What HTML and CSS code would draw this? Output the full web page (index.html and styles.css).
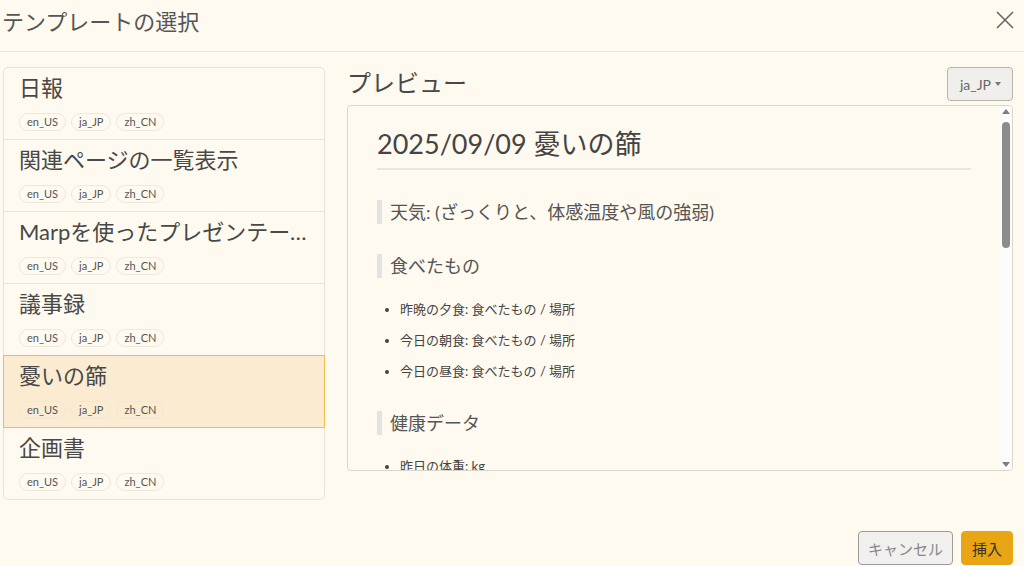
FILE: index.html
```html
<!DOCTYPE html>
<html lang="ja">

<head>
    <meta charset="UTF-8">
    <meta name="viewport" content="width=device-width, initial-scale=1.0">
    <title>テンプレートの選択</title>
    <link rel="stylesheet" href="styles.css">
</head>

<body>
    <div class="dialog">
        <div class="dialog-header">
            <h1 class="dialog-title">テンプレートの選択</h1>
            <button type="button" class="close-btn" aria-label="close">
                <svg width="18" height="18" viewBox="0 0 18 18">
                    <path d="M1 1 L17 17 M17 1 L1 17" stroke="#666" stroke-width="1.6" fill="none" />
                </svg>
            </button>
        </div>

        <div class="dialog-body">
            <ul class="template-list">
                <li class="template-item">
                    <div class="template-name">日報</div>
                    <div class="tags"><span class="tag">en_US</span><span class="tag">ja_JP</span><span class="tag">zh_CN</span></div>
                </li>
                <li class="template-item">
                    <div class="template-name">関連ページの一覧表示</div>
                    <div class="tags"><span class="tag">en_US</span><span class="tag">ja_JP</span><span class="tag">zh_CN</span></div>
                </li>
                <li class="template-item">
                    <div class="template-name">Marpを使ったプレゼンテーションのテンプレート</div>
                    <div class="tags"><span class="tag">en_US</span><span class="tag">ja_JP</span><span class="tag">zh_CN</span></div>
                </li>
                <li class="template-item">
                    <div class="template-name">議事録</div>
                    <div class="tags"><span class="tag">en_US</span><span class="tag">ja_JP</span><span class="tag">zh_CN</span></div>
                </li>
                <li class="template-item active">
                    <div class="template-name">憂いの篩</div>
                    <div class="tags"><span class="tag">en_US</span><span class="tag">ja_JP</span><span class="tag">zh_CN</span></div>
                </li>
                <li class="template-item">
                    <div class="template-name">企画書</div>
                    <div class="tags"><span class="tag">en_US</span><span class="tag">ja_JP</span><span class="tag">zh_CN</span></div>
                </li>
            </ul>

            <div class="preview-col">
                <div class="preview-head">
                    <h2 class="preview-title">プレビュー</h2>
                    <button type="button" class="locale-btn">ja_JP <span class="caret"></span></button>
                </div>
                <div class="preview-box">
                    <div class="preview-content">
                        <h1>2025/09/09 憂いの篩</h1>
                        <h2>天気: (ざっくりと、体感温度や風の強弱)</h2>
                        <h2>食べたもの</h2>
                        <ul>
                            <li>昨晩の夕食: 食べたもの / 場所</li>
                            <li>今日の朝食: 食べたもの / 場所</li>
                            <li>今日の昼食: 食べたもの / 場所</li>
                        </ul>
                        <h2>健康データ</h2>
                        <ul>
                            <li>昨日の体重: kg</li>
                        </ul>
                    </div>
                    <!-- scrollbar of the preview pane -->
                    <div class="scrollbar">
                        <span class="arrow-up"></span>
                        <div class="track"><div class="thumb"></div></div>
                        <span class="arrow-down"></span>
                    </div>
                </div>
            </div>
        </div>

        <div class="dialog-footer">
            <button type="button" class="btn cancel-btn">キャンセル</button>
            <button type="button" class="btn insert-btn">挿入</button>
        </div>
    </div>
</body>

</html>
```

FILE: styles.css
```css
body {
    margin: 0;
    background-color: #fffaf0;
    color: #444;
    font-family: Lato, "Noto Sans CJK JP", sans-serif;
}

.dialog {
    display: flex;
    flex-direction: column;
    height: 566px;
}

.dialog-header {
    display: flex;
    justify-content: space-between;
    align-items: center;
    height: 52px;
    padding: 0 10px 12px 2px;
    box-sizing: border-box;
    border-bottom: 1px solid #ebe6da;
}

.dialog-title {
    margin: 0;
    font-size: 22px;
    font-weight: normal;
    color: #555;
}

.close-btn {
    background: none;
    border: none;
    padding: 0;
    cursor: pointer;
    display: flex;
}

.dialog-body {
    display: grid;
    grid-template-columns: 322px 1fr;
    gap: 22px;
    padding: 15px 11px 0 3px;
    height: 479px;
    box-sizing: border-box;
}

.template-list {
    list-style: none;
    margin: 0;
    padding: 0;
    align-self: start;
    border: 1px solid #e8e3d7;
    border-radius: 5px;
}

.template-item {
    padding: 6px 15px 8px;
    border-bottom: 1px solid #ebe6db;
    cursor: pointer;
}

.template-item:last-child {
    border-bottom: none;
}

.template-item.active {
    background-color: #fbecd1;
    border: 1px solid #f0bd4c;
    margin: -1px -1px 0;
}

.template-name {
    font-size: 22px;
    line-height: 28px;
    white-space: nowrap;
    overflow: hidden;
    text-overflow: ellipsis;
    color: #484848;
}

.tags {
    display: flex;
    gap: 5px;
    margin-top: 11px;
}

.tag {
    font-size: 11px;
    line-height: 16px;
    padding: 0 7px;
    border: 1px solid #ece8de;
    border-radius: 9px;
    color: #555;
}

.preview-col {
    display: flex;
    flex-direction: column;
    min-width: 0;
}

.preview-head {
    display: flex;
    justify-content: space-between;
    align-items: flex-start;
    height: 38px;
}

.preview-title {
    margin: 0;
    font-size: 24px;
    font-weight: normal;
    line-height: 31px;
    color: #484848;
}

.locale-btn {
    height: 34px;
    padding: 0 11px 0 12px;
    background-color: #f0efeb;
    border: 1px solid #b8b5ae;
    border-radius: 4px;
    color: #666;
    font-family: inherit;
    font-size: 14px;
    display: flex;
    align-items: center;
    gap: 4px;
}

.caret {
    width: 0;
    height: 0;
    border-left: 3px solid transparent;
    border-right: 3px solid transparent;
    border-top: 4px solid #777;
}

.preview-box {
    display: flex;
    height: 366px;
    box-sizing: border-box;
    border: 1px solid #d9d5cb;
    border-radius: 4px;
    overflow: hidden;
}

.preview-content {
    flex: 1;
    min-width: 0;
    overflow: hidden;
    padding: 0 29px;
}

.preview-box h1 {
    margin: 21px 0 0;
    padding-bottom: 7px;
    font-size: 27px;
    font-weight: normal;
    line-height: 34px;
    border-bottom: 2px solid #e6e6e6;
}

.preview-box h2 {
    margin: 30px 0 0;
    padding-left: 8px;
    border-left: 5px solid #e3e3e3;
    font-size: 18px;
    font-weight: normal;
    line-height: 24px;
    color: #555;
}

.preview-box ul {
    margin: 21px 0 0;
    padding-left: 23px;
    font-size: 13px;
    line-height: 20px;
}

.preview-box li {
    margin-bottom: 11px;
}

.scrollbar {
    width: 12px;
    display: flex;
    flex-direction: column;
    align-items: center;
    background-color: #fcfcfb;
    padding: 3px 0;
    box-sizing: border-box;
}

.arrow-up,
.arrow-down {
    width: 0;
    height: 0;
    border-left: 4px solid transparent;
    border-right: 4px solid transparent;
}

.arrow-up {
    border-bottom: 5px solid #7d7d7d;
}

.arrow-down {
    border-top: 5px solid #7d7d7d;
}

.track {
    flex: 1;
    width: 100%;
    padding: 8px 1px 4px;
    box-sizing: border-box;
}

.thumb {
    height: 126px;
    border-radius: 5px;
    background-color: #8c8c8c;
    margin: 0 1px;
}

.dialog-footer {
    display: flex;
    justify-content: flex-end;
    gap: 8px;
    padding: 0 11px;
}

.btn {
    height: 34px;
    border-radius: 4px;
    font-family: inherit;
    font-size: 15px;
    cursor: pointer;
}

.cancel-btn {
    padding: 0 9px;
    background-color: #f1f0ee;
    border: 1px solid #9e9c98;
    color: #888;
}

.insert-btn {
    padding: 0 10px;
    background-color: #e8a514;
    border: 1px solid #e8a514;
    color: #333;
}
```
